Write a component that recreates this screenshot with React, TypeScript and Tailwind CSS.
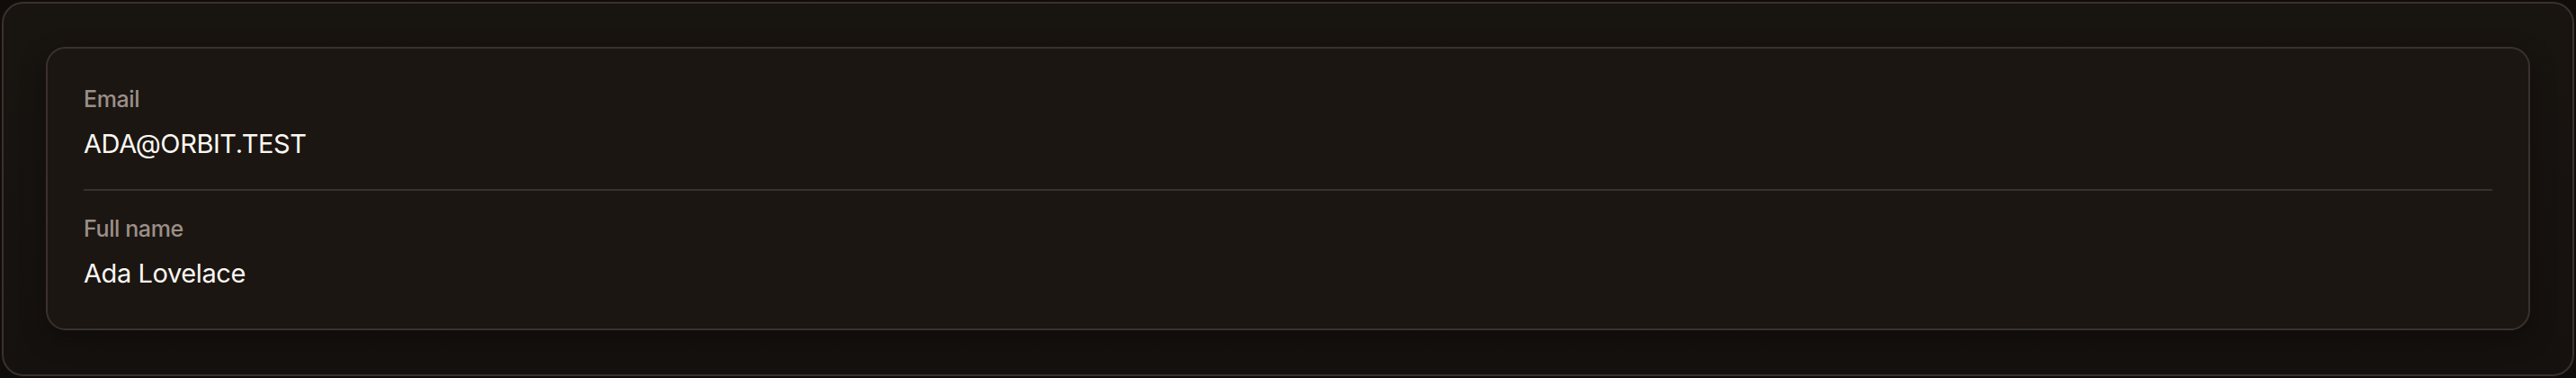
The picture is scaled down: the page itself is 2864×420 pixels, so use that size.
export default function App() {
  const fields = [
    { label: "Email", value: "ADA@ORBIT.TEST" },
    { label: "Full name", value: "Ada Lovelace" },
  ];

  return (
    <div className="min-h-[420px] bg-[#0f0c0a] p-[2px] font-['Inter',sans-serif]">
      <div className="rounded-[24px] border-2 border-[#3a312d] bg-gradient-to-b from-[#181410] to-[#15110e] px-[47px] pt-[48px] pb-[49px]">
        {/* Profile details */}
        <div className="rounded-[22px] border-2 border-[#3a312d] bg-[#1b1612] px-[40px] pt-[14px] pb-[11px] shadow-[0_10px_28px_rgba(0,0,0,0.35)]">
          {fields.map((f, i) => (
            <div
              key={f.label}
              className={
                i < fields.length - 1
                  ? "border-b-2 border-[#3a312d] pt-[24px] pb-[30px]"
                  : "pt-[24px] pb-[30px]"
              }
            >
              <div className="text-[25px] leading-[36px] font-medium tracking-[-0.4px] text-[#9c8f88]">
                {f.label}
              </div>
              <div className="mt-[12px] text-[29px] leading-[40px] tracking-[-0.4px] text-[#fbf7f1]">
                {f.value}
              </div>
            </div>
          ))}
        </div>
      </div>
    </div>
  );
}
